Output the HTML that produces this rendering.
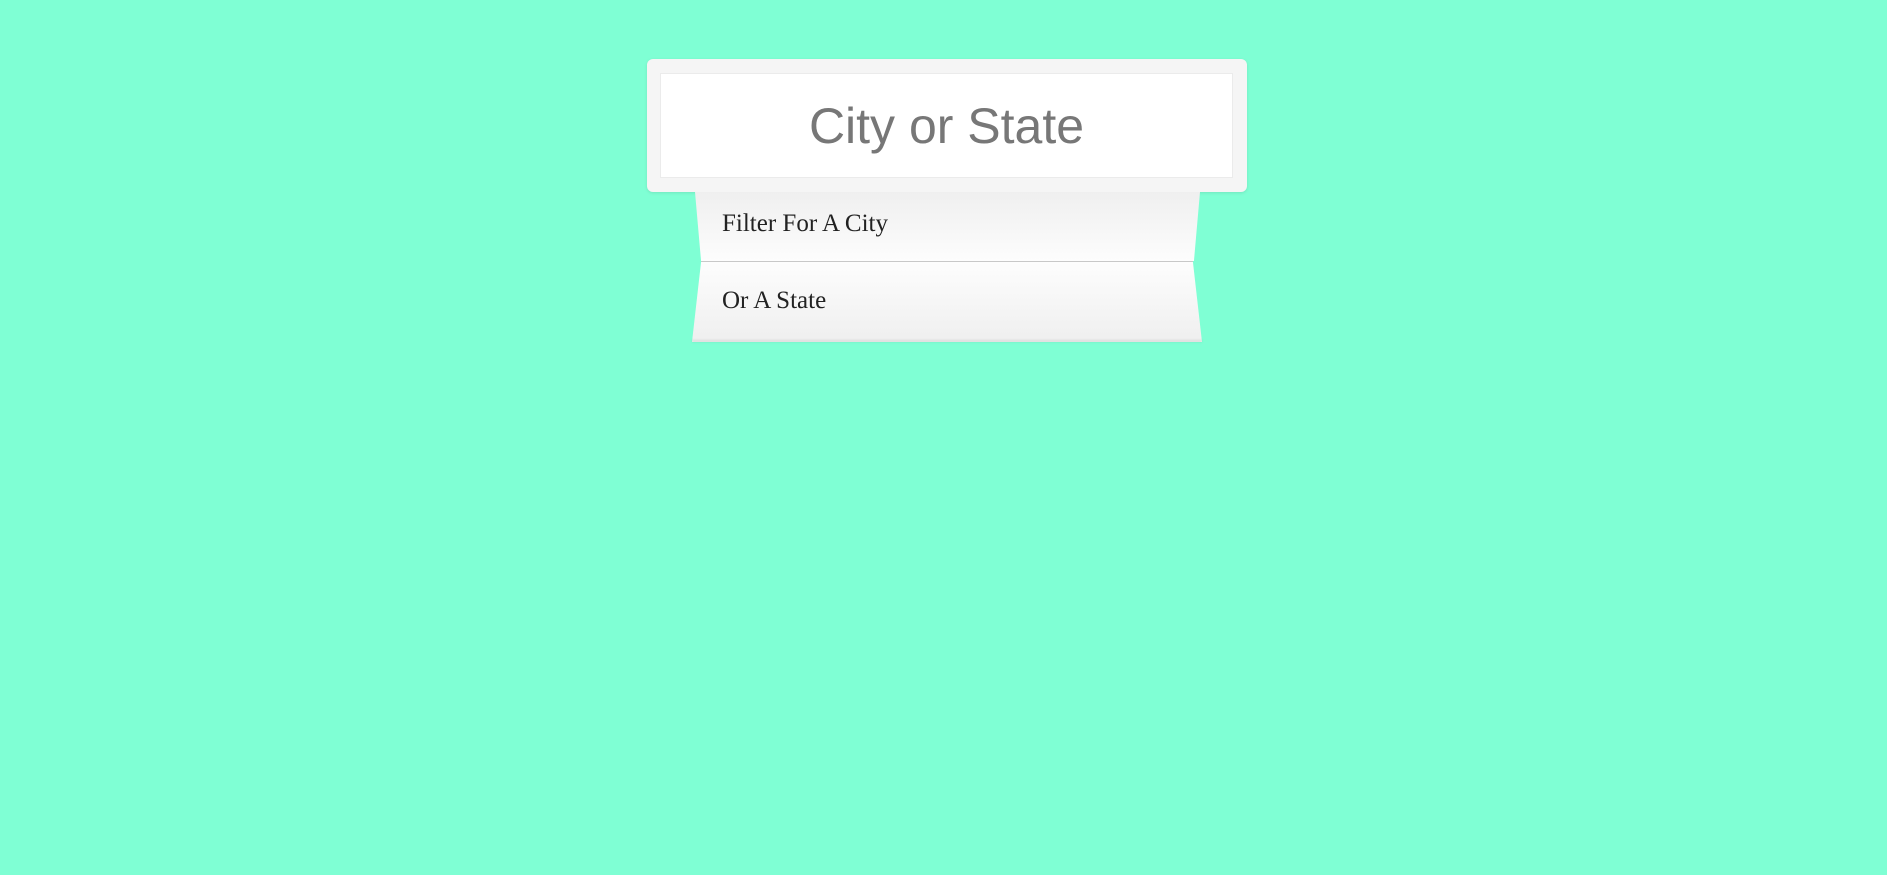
<!DOCTYPE html>
<html><head><meta charset="utf-8">
<style>
html,body{margin:0;padding:0;width:1887px;height:875px;background:#7fffd4;overflow:hidden;position:relative}
.outer{position:absolute;left:647px;top:59px;width:600px;height:133px;background:#f5f5f5;border-radius:6px;box-shadow:0 1px 3px rgba(0,0,0,0.1)}
.inner{position:absolute;left:13px;top:14px;width:571px;height:103px;background:#fff;border:1px solid #ebebeb;font:50px "Liberation Sans",sans-serif;color:#777;text-align:center;line-height:105px}
.shadow{position:absolute;left:692px;top:340px;width:510px;height:3px;background:linear-gradient(rgba(0,0,0,0.12),rgba(0,0,0,0));filter:blur(1px)}
.item{position:absolute;font:25px "Liberation Serif",serif;color:#222}
.i1{left:695px;top:192px;width:505px;height:69px;clip-path:polygon(0 0,100% 0,98.8% 100%,1.2% 100%);background:linear-gradient(#efefef,#fdfdfd)}
.i2{left:692px;top:261px;width:510px;height:80px;clip-path:polygon(1.8% 0,98.2% 0,100% 100%,0 100%);background:linear-gradient(#fdfdfd,#efefef);border-top:1px solid #c8c8c8}
.t{position:absolute;left:722px;font:25px "Liberation Serif",serif;color:#222;white-space:nowrap}
</style></head><body>
<div class="outer"><div class="inner">City or State</div></div>
<div class="item i1"></div>
<div class="item i2"></div>
<div class="shadow"></div>
<div class="t" style="top:210px">Filter For A City</div>
<div class="t" style="top:287px">Or A State</div>
</body></html>
